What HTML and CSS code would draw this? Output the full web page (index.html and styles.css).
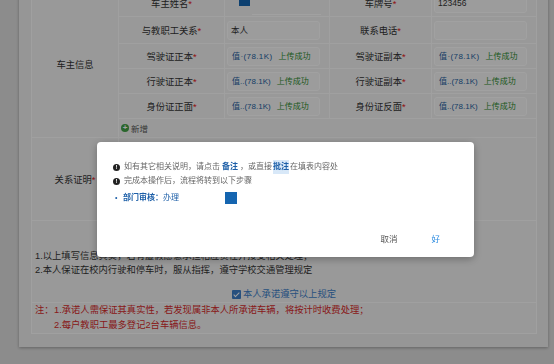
FILE: index.html
```html
<!DOCTYPE html>
<html lang="zh-CN">
<head>
    <meta charset="UTF-8">
    <meta name="viewport" content="width=device-width, initial-scale=1.0">
    <title>车辆登记</title>
    <link rel="stylesheet" href="styles.css">
</head>
<body>

    <div class="page">
        <div class="card">
            <table class="form">
                <colgroup>
                    <col class="c-group">
                    <col class="c-label">
                    <col class="c-value">
                    <col class="c-label2">
                    <col class="c-value">
                </colgroup>
                <tr class="row-input">
                    <td rowspan="6">车主信息</td>
                    <td class="label">车主姓名<i>*</i></td>
                    <td class="value">
                        <div class="owner">
                            <span class="owner-pick"></span>
                            <span class="owner-line"></span>
                        </div>
                    </td>
                    <td class="label">车牌号<i>*</i></td>
                    <td class="value"><div class="field">123456</div></td>
                </tr>
                <tr class="row-input">
                    <td class="label">与教职工关系<i>*</i></td>
                    <td class="value"><div class="field">本人</div></td>
                    <td class="label">联系电话<i>*</i></td>
                    <td class="value"><div class="field"></div></td>
                </tr>
                <tr class="row-file">
                    <td class="label">驾驶证正本<i>*</i></td>
                    <td class="value"><div class="field upload"><a class="mono">值·(78.1K)</a><span>上传成功</span></div></td>
                    <td class="label">驾驶证副本<i>*</i></td>
                    <td class="value"><div class="field upload"><a class="mono">值·(78.1K)</a><span>上传成功</span></div></td>
                </tr>
                <tr class="row-file">
                    <td class="label">行驶证正本<i>*</i></td>
                    <td class="value"><div class="field upload"><a>值..(78.1K)</a><span>上传成功</span></div></td>
                    <td class="label">行驶证副本<i>*</i></td>
                    <td class="value"><div class="field upload"><a>值..(78.1K)</a><span>上传成功</span></div></td>
                </tr>
                <tr class="row-file">
                    <td class="label">身份证正面<i>*</i></td>
                    <td class="value"><div class="field upload"><a>值..(78.1K)</a><span>上传成功</span></div></td>
                    <td class="label">身份证反面<i>*</i></td>
                    <td class="value"><div class="field upload"><a>值..(78.1K)</a><span>上传成功</span></div></td>
                </tr>
                <tr class="row-add">
                    <td colspan="4" class="value">
                        <span class="add"><b>+</b>新增</span>
                    </td>
                </tr>
                <tr class="row-proof">
                    <td>关系证明<i>*</i></td>
                    <td colspan="4"></td>
                </tr>
                <tr class="row-promise">
                    <td colspan="5" class="promise">
                        <p>1.以上填写信息真实，若有虚假愿意承担相应责任并接受相关处理；</p>
                        <p>2.本人保证在校内行驶和停车时，服从指挥，遵守学校交通管理规定</p>
                        <label class="agree"><span class="check"></span>本人承诺遵守以上规定</label>
                    </td>
                </tr>
                <tr class="row-note">
                    <td colspan="5" class="note">
                        <div class="note-body">
                            <span class="note-head">注：</span>
                            <div>
                                <p>1.承诺人需保证其真实性，若发现属非本人所承诺车辆，将按计时收费处理；</p>
                                <p>2.每户教职工最多登记2台车辆信息。</p>
                            </div>
                        </div>
                    </td>
                </tr>
            </table>
        </div>
    </div>

    <div class="mask"></div>

    <div class="dialog">
        <ul class="tips">
            <li><span class="bang">!</span>如有其它相关说明，请点击 <b>备注</b>，或直接 <b class="mark">批注</b> 在填表内容处</li>
            <li><span class="bang">!</span>完成本操作后，流程将转到以下步骤</li>
            <li class="step"><span class="dot">•</span><b>部门审核：</b>办理<span class="step-box"></span></li>
        </ul>
        <div class="actions">
            <button class="cancel">取消</button>
            <button class="ok">好</button>
        </div>
    </div>

</body>
</html>
```

FILE: styles.css
```css
* {
    margin: 0;
    padding: 0;
    box-sizing: border-box;
}

body {
    background-color: #dcdcdc;
    font-family: "Liberation Sans", "Noto Sans CJK SC", sans-serif;
    color: #333;
    height: 364px;
    overflow: hidden;
}

.page {
    padding-left: 19px;
}

.card {
    width: 529px;
    margin-top: -11px;
    padding: 0 12px 13px;
    background-color: #ebebeb;
    box-shadow: 0 1px 3px rgba(0, 0, 0, .3);
}

.form {
    width: 505px;
    border-collapse: collapse;
    table-layout: fixed;
    background-color: #f0f0f0;
    font-size: 9.3px;
}

.c-group { width: 87px; }
.c-label { width: 106px; }
.c-value { width: 105px; }
.c-label2 { width: 102px; }

.form td {
    border: 1px solid #fbfbfb;
    text-align: center;
    vertical-align: middle;
    padding: 0;
}

.form i {
    font-style: normal;
    color: #e02020;
}

.row-input td { height: 27px; }
.row-file td { height: 25px; }
.row-add td { height: 19px; }
.row-proof td { height: 83px; }
.row-promise td { height: 82px; }
.row-note td { height: 30px; }

.form td.value {
    text-align: left;
    padding-left: 2px;
}

.field {
    width: 93px;
    height: 19px;
    line-height: 17px;
    padding-left: 3px;
    border: 1px solid #fcfcfc;
    border-radius: 3px;
    background-color: #f4f4f4;
    font-size: 8.5px;
}

.owner {
    display: flex;
    align-items: flex-end;
    height: 25px;
}

.owner-pick {
    width: 11px;
    height: 11px;
    margin: 0 0 10px 12px;
    background-color: #1565b0;
}

.owner-line {
    flex: 1;
    margin: 0 8px 1px 2px;
    border-bottom: 1px solid #fcfcfc;
}

.upload {
    display: flex;
    align-items: center;
    gap: 6px;
    padding-left: 4px;
    font-size: 8px;
}

.upload a {
    color: #1f5f9f;
}

.upload a.mono {
    letter-spacing: .4px;
}

.upload span {
    color: #2e8b2e;
}

.add {
    display: inline-flex;
    align-items: center;
    gap: 2px;
    font-size: 8.5px;
    color: #555;
}

.add b {
    width: 8px;
    height: 8px;
    border-radius: 50%;
    background-color: #43a047;
    color: #fff;
    font-size: 8px;
    line-height: 8px;
    text-align: center;
}

.form td.promise {
    text-align: left;
    vertical-align: top;
    padding: 28px 3px 0;
    line-height: 14px;
}

.agree {
    display: flex;
    align-items: center;
    justify-content: center;
    gap: 2px;
    margin-top: 10px;
    color: #3d7ec6;
}

.check {
    position: relative;
    width: 9px;
    height: 9px;
    border-radius: 1px;
    background-color: #3d7ec6;
}

.check::after {
    content: "";
    position: absolute;
    left: 3px;
    top: 1px;
    width: 2px;
    height: 5px;
    border: solid #fff;
    border-width: 0 1px 1px 0;
    transform: rotate(45deg);
}

.form td.note {
    text-align: left;
    padding: 0 3px;
    line-height: 15px;
    color: #d42a2a;
}

.note-body {
    display: flex;
}

.note-head {
    width: 19px;
    flex: none;
}

.mask {
    position: fixed;
    inset: 0;
    background-color: rgba(0, 0, 0, .36);
}

.dialog {
    position: fixed;
    left: 97px;
    top: 142px;
    width: 377px;
    height: 115px;
    background-color: #fff;
    border-radius: 4px;
    box-shadow: 0 2px 8px rgba(0, 0, 0, .3);
    padding: 18px 17px 0 16px;
    font-size: 8px;
    color: #666;
}

.tips {
    list-style: none;
}

.tips li {
    display: flex;
    align-items: center;
    line-height: 14px;
}

.bang {
    width: 7px;
    height: 7px;
    margin-right: 4px;
    border-radius: 50%;
    background-color: #222;
    color: #fff;
    font-size: 6px;
    font-weight: bold;
    line-height: 7px;
    text-align: center;
}

.tips b {
    color: #1d5fa8;
    margin: 0 2px;
}

.tips b.mark {
    background-color: #d8e8f8;
    margin: 0 1px;
}

.step {
    margin-top: 3px;
    color: #1d5fa8;
}

.tips .step b {
    margin: 0;
}

.dot {
    width: 10px;
    padding-left: 2px;
    font-size: 7px;
}

.step-box {
    width: 12px;
    height: 12px;
    margin-left: 46px;
    background-color: #1565b0;
}

.actions {
    position: absolute;
    right: 17px;
    bottom: 12px;
    display: flex;
}

.actions button {
    border: none;
    background: none;
    padding: 0 17px;
    height: 14px;
    font-family: inherit;
    font-size: 8.5px;
    color: #555;
}

.actions .ok {
    color: #2d8ce0;
}
```
